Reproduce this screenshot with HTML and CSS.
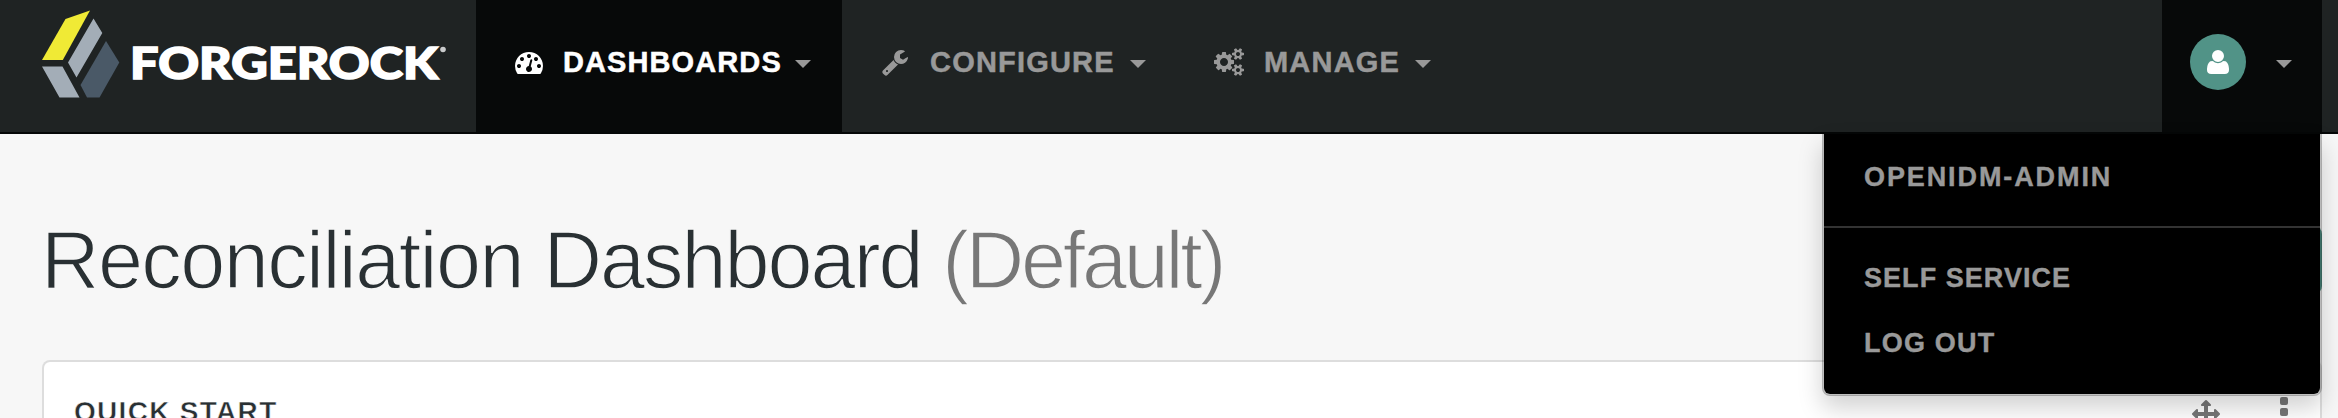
FILE: index.html
```html
<!DOCTYPE html>
<html lang="en">
<head>
<meta charset="utf-8">
<title>Reconciliation Dashboard</title>
<link rel="stylesheet" href="styles.css">
</head>
<body>
<nav class="navbar">
  <a class="brand">
    <svg class="logo" width="410" height="110" viewBox="40 0 410 110">
      <path fill="#f0ea35" d="M42 60h20.800L90 10.500 65.500 19z"/>
      <path fill="#a3adb7" d="M93.500 18.500l8.800 14.500-25.800 44.500-8.500-15zM42 66.500h20.500l17 31h-20z"/>
      <path fill="#4a5967" d="M106 41l13.300 21.500-19.800 35H87L80.500 85z"/>
      <text class="logo-text" x="130" y="79" textLength="308" lengthAdjust="spacingAndGlyphs">FORGEROCK</text>
      <circle cx="443" cy="49.500" r="2.800" fill="#c9cbcc"/>
    </svg>
  </a>
  <a class="nav-item active">
    <svg class="icon icon-dash" viewBox="0 0 1792 1792"><path d="M384 1152q0-53-37.500-90.500t-90.500-37.500-90.500 37.500-37.500 90.500 37.500 90.500 90.500 37.500 90.500-37.500 37.500-90.500zm192-448q0-53-37.500-90.500t-90.500-37.500-90.500 37.500-37.500 90.500 37.500 90.500 90.500 37.500 90.500-37.500 37.500-90.500zm428 481l101-382q6-26-7.500-48.500t-38.500-29.500-48 6.500-30 39.500l-101 382q-60 5-107 43.500t-63 98.500q-20 77 20 146t117 89 146-20 89-117q16-60-6-117t-72-91zm660-33q0-53-37.500-90.500t-90.500-37.500-90.500 37.500-37.500 90.500 37.500 90.500 90.500 37.500 90.500-37.500 37.500-90.500zm-640-640q0-53-37.500-90.500t-90.500-37.500-90.500 37.500-37.500 90.500 37.500 90.500 90.500 37.500 90.500-37.500 37.500-90.500zm448 192q0-53-37.500-90.500t-90.500-37.500-90.500 37.500-37.500 90.500 37.500 90.500 90.500 37.500 90.500-37.500 37.500-90.500zm320 448q0 261-141 483-19 29-54 29h-1402q-35 0-54-29-141-221-141-483 0-182 71-348t191-286 286-191 348-71 348 71 286 191 191 286 71 348z"/></svg>
    <span class="label label-dash">DASHBOARDS</span>
    <span class="caret"></span>
  </a>
  <a class="nav-item configure">
    <svg class="icon icon-wrench" viewBox="0 0 1792 1792"><path d="M448 1472q0-26-19-45t-45-19-45 19-19 45 19 45 45 19 45-19 19-45zm644-420l-682 682q-37 37-90 37-52 0-91-37l-106-108q-38-36-38-90 0-53 38-91l681-681q39 98 114.500 173.500t173.500 114.500zm634-435q0 39-23 106-47 134-164.500 217.500t-258.500 83.500q-185 0-316.500-131.500t-131.500-316.500 131.500-316.500 316.500-131.500q58 0 121.500 16.500t107.500 46.500q16 11 16 28t-16 28l-293 169v224l193 107q5-3 79-48.500t135.500-81 70.500-35.500q15 0 23.500 10t8.500 25z"/></svg>
    <span class="label label-configure">CONFIGURE</span>
    <span class="caret"></span>
  </a>
  <a class="nav-item manage">
    <svg class="icon icon-cogs" viewBox="-64 0 1920 1792"><path d="M832 896q0-106-75-181t-181-75-181 75-75 181 75 181 181 75 181-75 75-181zm768 512q0-52-38-90t-90-38-90 38-38 90q0 53 37.500 90.500t90.500 37.500 90.500-37.500 37.500-90.500zm0-1024q0-52-38-90t-90-38-90 38-38 90q0 53 37.500 90.500t90.500 37.500 90.500-37.500 37.500-90.500zm-384 421v185q0 10-7 19.500t-16 10.500l-155 24q-11 35-32 76 34 48 90 115 7 11 7 20 0 12-7 19-23 30-82.500 89.500t-78.500 59.500q-11 0-21-7l-115-90q-37 19-77 31-11 108-23 155-7 24-30 24h-186q-11 0-20-7.500t-10-17.500l-23-153q-34-10-75-31l-118 89q-7 7-20 7-11 0-21-8-144-133-144-160 0-9 7-19 10-14 41-53t47-61q-23-44-35-82l-152-24q-10-1-17-9.500t-7-19.500v-185q0-10 7-19.500t16-10.500l155-24q11-35 32-76-34-48-90-115-7-11-7-20 0-12 7-20 22-30 82-89t79-59q11 0 21 7l115 90q34-18 77-32 11-108 23-154 7-24 30-24h186q11 0 20 7.500t10 17.500l23 153q34 10 75 31l118-89q8-7 20-7 11 0 21 8 144 133 144 160 0 8-7 19-12 16-42 54t-45 60q23 48 34 82l152 23q10 2 17 10.500t7 19.500zm640 533v140q0 16-149 31-12 27-30 52 51 113 51 138 0 4-4 7-122 71-124 71-8 0-46-47t-52-68q-20 2-30 2t-30-2q-14 21-52 68t-46 47q-2 0-124-71-4-3-4-7 0-25 51-138-18-25-30-52-149-15-149-31v-140q0-16 149-31 13-29 30-52-51-113-51-138 0-4 4-7 4-2 35-20t59-34 30-16q8 0 46 46.500t52 67.500q20-2 30-2t30 2q51-71 92-112l6-2q4 0 124 70 4 3 4 7 0 25-51 138 17 23 30 52 149 15 149 31zm0-1024v140q0 16-149 31-12 27-30 52 51 113 51 138 0 4-4 7-122 71-124 71-8 0-46-47t-52-68q-20 2-30 2t-30-2q-14 21-52 68t-46 47q-2 0-124-71-4-3-4-7 0-25 51-138-18-25-30-52-149-15-149-31v-140q0-16 149-31 13-29 30-52-51-113-51-138 0-4 4-7 4-2 35-20t59-34 30-16q8 0 46 46.500t52 67.500q20-2 30-2t30 2q51-71 92-112l6-2q4 0 124 70 4 3 4 7 0 25-51 138 17 23 30 52 149 15 149 31z"/></svg>
    <span class="label label-manage">MANAGE</span>
    <span class="caret"></span>
  </a>
  <div class="user">
    <span class="avatar">
      <svg class="icon" viewBox="0 0 1792 1792"><path d="M1600 1405q0 120-73 189.500t-194 69.500h-874q-121 0-194-69.500t-73-189.500q0-53 3.500-103.500t14-109 26.500-108.500 43-97.500 62-81 85.500-53.500 111.500-20q9 0 42 21.500t74.500 48 108 48 133.500 21.500 133.500-21.500 108-48 74.500-48 42-21.500q61 0 111.500 20t85.500 53.500 62 81 43 97.500 26.500 108.500 14 109 3.500 103.500zm-320-893q0 159-112.500 271.500t-271.500 112.500-271.500-112.500-112.500-271.500 112.500-271.500 271.500-112.500 271.500 112.500 112.500 271.500z"/></svg>
    </span>
    <span class="caret"></span>
    <div class="menu">
      <a class="menu-item menu-user">OPENIDM-ADMIN</a>
      <div class="divider"></div>
      <a class="menu-item menu-self">SELF SERVICE</a>
      <a class="menu-item menu-logout">LOG OUT</a>
    </div>
  </div>
</nav>
<main class="page">
  <header class="page-header">
    <h1 class="title"><span class="name">Reconciliation</span> <span class="name-second">Dashboard</span> <span class="muted">(Default)</span></h1>
    <div class="button"></div>
  </header>
  <section class="panel">
    <h2 class="panel-title">QUICK START</h2>
    <div class="tools">
      <svg class="icon" viewBox="0 0 1792 1792"><path d="M1792 896q0 26-19 45l-256 256q-19 19-45 19t-45-19-19-45v-128h-384v384h128q26 0 45 19t19 45-19 45l-256 256q-19 19-45 19t-45-19l-256-256q-19-19-19-45t19-45 45-19h128v-384h-384v128q0 26-19 45t-45 19-45-19l-256-256q-19-19-19-45t19-45l256-256q19-19 45-19t45 19 19 45v128h384v-384h-128q-26 0-45-19t-19-45 19-45l256-256q19-19 45-19t45 19l256 256q19 19 19 45t-19 45-45 19h-128v384h384v-128q0-26 19-45t45-19 45 19l256 256q19 19 19 45z"/></svg>
      <svg class="dots" width="8" height="30" viewBox="0 0 8 30"><rect width="8" height="8" rx="2"/><rect y="11" width="8" height="8" rx="2"/><rect y="22" width="8" height="8" rx="2"/></svg>
    </div>
  </section>
</main>
</body>
</html>
```
FILE: styles.css
```css
* { box-sizing: border-box; }

body {
  margin: 0;
  height: 418px;
  overflow: hidden;
  background: #f7f7f7;
  font-family: "Liberation Sans", Arial, sans-serif;
  color: #293033;
}

.navbar {
  display: flex;
  height: 134px;
  background: #1f2323;
  border-bottom: 2px solid #050707;
}

.brand { width: 476px; padding-left: 40px; }
.logo { display: block; }
.logo-text { font: 900 44.500px Lato, sans-serif; fill: #fff; stroke: #fff; stroke-width: 1.600px; }

.nav-item {
  display: flex;
  align-items: flex-start;
  padding-top: 48px;
  color: #999;
  font-size: 29px;
  font-weight: bold;
  line-height: 28px;
}
.active { width: 366px; padding-left: 39px; background: #070909; color: #fff; }
.configure { width: 333px; padding-left: 39px; }
.manage { padding-left: 39px; }

.icon { flex: none; width: 28px; height: 28px; fill: currentColor; }
.icon-cogs { width: 30px; }
.label { white-space: nowrap; letter-spacing: 1.200px; -webkit-text-stroke: .5px currentColor; }
.label-dash { width: 232px; margin-left: 20px; letter-spacing: 1.100px; }
.label-configure { width: 200px; margin-left: 21px; }
.label-manage { width: 151px; margin-left: 20px; }

.caret {
  margin-top: 12px;
  border: 8px solid transparent;
  border-top-color: #999;
  border-bottom: 0;
}

.user {
  position: relative;
  display: flex;
  align-items: flex-start;
  width: 160px;
  height: 132px;
  margin-left: auto;
  margin-right: 16px;
  padding: 34px 0 0 28px;
  background: #070909;
}
.user .caret { margin: 26px 0 0 30px; }
.avatar {
  display: flex;
  justify-content: center;
  width: 56px;
  height: 56px;
  padding-top: 14px;
  border-radius: 50%;
  background: #519387;
  color: #fff;
}
.avatar .icon { margin-right: 1px; }

.menu {
  position: absolute;
  z-index: 2;
  top: 134px;
  right: 0;
  width: 500px;
  height: 262px;
  padding-top: 27px;
  background: #000;
  background-clip: padding-box;
  border: 2px solid rgba(0, 0, 0, .25);
  border-top: 0;
  border-radius: 0 0 8px 8px;
  box-shadow: 0 12px 24px rgba(0, 0, 0, .18);
}
.menu-item {
  display: block;
  padding-left: 40px;
  color: #999;
  font-size: 27px;
  font-weight: bold;
  line-height: 32px;
  letter-spacing: 1.900px;
  -webkit-text-stroke: .4px currentColor;
}
.divider { height: 2px; margin: 33px 0 34px; background: #333; }
.menu-self { margin-bottom: 33px; letter-spacing: 1.050px; }
.menu-logout { letter-spacing: 1.200px; }

.page { height: 284px; padding: 0 16px 0 42px; overflow: hidden; }
.page-header { display: flex; height: 226px; justify-content: space-between; }
.title {
  margin: 80px 0 0 -1px;
  font-size: 81px;
  font-weight: normal;
  line-height: 92px;
  letter-spacing: -2px;
  white-space: nowrap;
  -webkit-text-stroke: 1.500px #f7f7f7;
}
.name { letter-spacing: -1.600px; }
.name-second { letter-spacing: -2px; }
.muted { color: #777; letter-spacing: -3.300px; }
.button { width: 220px; height: 68px; margin-top: 92px; border-radius: 8px; background: #519387; }

.panel {
  display: flex;
  justify-content: space-between;
  height: 58px;
  padding: 34px 32px 0 30px;
  background: #fff;
  border: 2px solid #ddd;
  border-bottom: 0;
  border-radius: 8px 8px 0 0;
}
.panel-title {
  margin: 0;
  font-size: 28px;
  line-height: 32px;
  letter-spacing: 1.300px;
  -webkit-text-stroke: .5px #fff;
}
.tools { display: flex; gap: 60px; color: #777; }
.tools .icon { margin-top: 4px; }
.dots { margin-top: 1px; fill: currentColor; }
```
